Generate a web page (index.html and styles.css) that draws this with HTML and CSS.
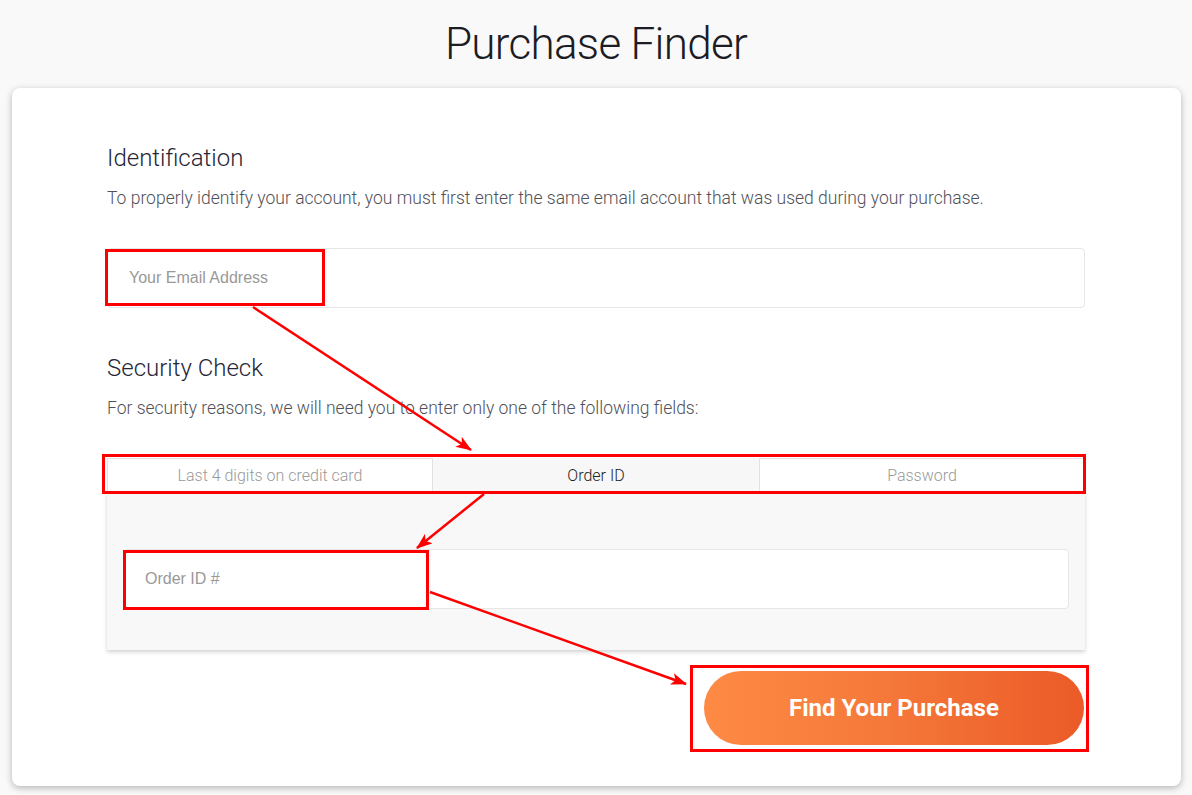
FILE: index.html
```html
<!DOCTYPE html>
<html lang="en">
<head>
<meta charset="utf-8">
<title>Purchase Finder</title>
<link rel="stylesheet" href="styles.css">
</head>
<body>
<h1 class="title">Purchase Finder</h1>
<main class="card">
  <section class="section">
    <h2 class="section-title">Identification</h2>
    <p class="section-text">To properly identify your account, you must first enter the same email account that was used during your purchase.</p>
    <input class="field" type="text" placeholder="Your Email Address">
  </section>
  <section class="section security">
    <h2 class="section-title">Security Check</h2>
    <p class="section-text">For security reasons, we will need you to enter only one of the following fields:</p>
    <div class="tabs">
      <div class="tab">Last 4 digits on credit card</div>
      <div class="tab active">Order ID</div>
      <div class="tab">Password</div>
    </div>
    <div class="panel">
      <input class="field" type="text" placeholder="Order ID #">
    </div>
  </section>
  <div class="actions">
    <button class="find-btn" type="button">Find Your Purchase</button>
  </div>
</main>

<svg class="annotations" width="1192" height="795" viewBox="0 0 1192 795" aria-hidden="true">
  <defs>
    <marker id="head" markerUnits="userSpaceOnUse" markerWidth="16" markerHeight="12" refX="15" refY="6" orient="auto">
      <path d="M0,0 L16,6 L0,12 L4,6 Z" fill="#ff0000"/>
    </marker>
  </defs>
  <g fill="none" stroke="#ff0000" stroke-width="3">
    <rect x="106.5" y="250.5" width="217" height="54"/>
    <rect x="103.5" y="455.5" width="981" height="37"/>
    <rect x="124.5" y="551.5" width="303" height="57"/>
    <rect x="691.5" y="666.5" width="396" height="84"/>
  </g>
  <g stroke="#ff0000" stroke-width="2.5">
    <line x1="253" y1="307" x2="471" y2="450" marker-end="url(#head)"/>
    <line x1="484" y1="494" x2="417" y2="548" marker-end="url(#head)"/>
    <line x1="430" y1="592" x2="686" y2="684" marker-end="url(#head)"/>
  </g>
</svg>
</body>
</html>
```

FILE: styles.css
```css
* { box-sizing: border-box; }

body {
  margin: 0;
  background: #f9f9f9;
  font-family: Roboto, "Liberation Sans", Arial, sans-serif;
  color: #333;
  position: relative;
  width: 1192px;
  height: 795px;
  overflow: hidden;
}

.title {
  margin: 0;
  padding-top: 16px;
  height: 88px;
  text-align: center;
  font-family: Roboto, sans-serif;
  font-weight: 300;
  font-size: 44px;
  line-height: 56px;
  color: #1c1c24;
  letter-spacing: -0.7px;
}

.card {
  margin: 0 11px 0 12px;
  background: #fff;
  border-radius: 8px;
  box-shadow: 0 2px 7px rgba(0, 0, 0, 0.28);
  padding: 56px 96px 41px 95px;
}

.section-title {
  margin: 0;
  font-weight: 300;
  font-size: 24px;
  line-height: 29px;
  color: #262636;
}

.section-text {
  margin: 13px 0 0;
  font-weight: 300;
  font-size: 17.5px;
  line-height: 24px;
  color: #505058;
}

.field {
  display: block;
  width: 100%;
  height: 60px;
  margin-top: 38px;
  padding: 0 21px;
  border: 1px solid #e6e6e6;
  border-radius: 4px;
  background: #fff;
  font-family: "Liberation Sans", Arial, sans-serif;
  font-size: 16px;
  color: #333;
  outline: none;
}

.field::placeholder { color: #999; }

.security { margin-top: 46px; }

.security .section-text { margin-top: 13px; }

.tabs {
  display: grid;
  grid-template-columns: 1fr 1fr 1fr;
  margin-top: 38px;
  height: 34px;
}

.tab {
  display: flex;
  align-items: center;
  justify-content: center;
  padding-top: 1px;
  font-weight: 300;
  font-size: 16px;
  color: #999;
  background: #fff;
  border: 1px solid #e2e2e2;
}

.tab.active {
  background: #f7f7f7;
  color: #222;
  border-color: #f7f7f7;
}

.panel {
  background: #f8f8f8;
  padding: 57px 16px 41px;
  box-shadow: 0 2px 4px rgba(0, 0, 0, 0.18);
}

.panel .field { margin-top: 0; }

.actions {
  display: flex;
  justify-content: flex-end;
  margin-top: 21px;
}

.find-btn {
  width: 380px;
  height: 74px;
  border: none;
  border-radius: 37px;
  background: linear-gradient(90deg, #fe8a44 0%, #f57a3a 45%, #eb5a28 100%);
  color: #fff;
  font-family: Roboto, sans-serif;
  font-weight: 700;
  font-size: 24px;
  margin-right: 1px;
}

.annotations {
  position: absolute;
  top: 0;
  left: 0;
  pointer-events: none;
}
```
